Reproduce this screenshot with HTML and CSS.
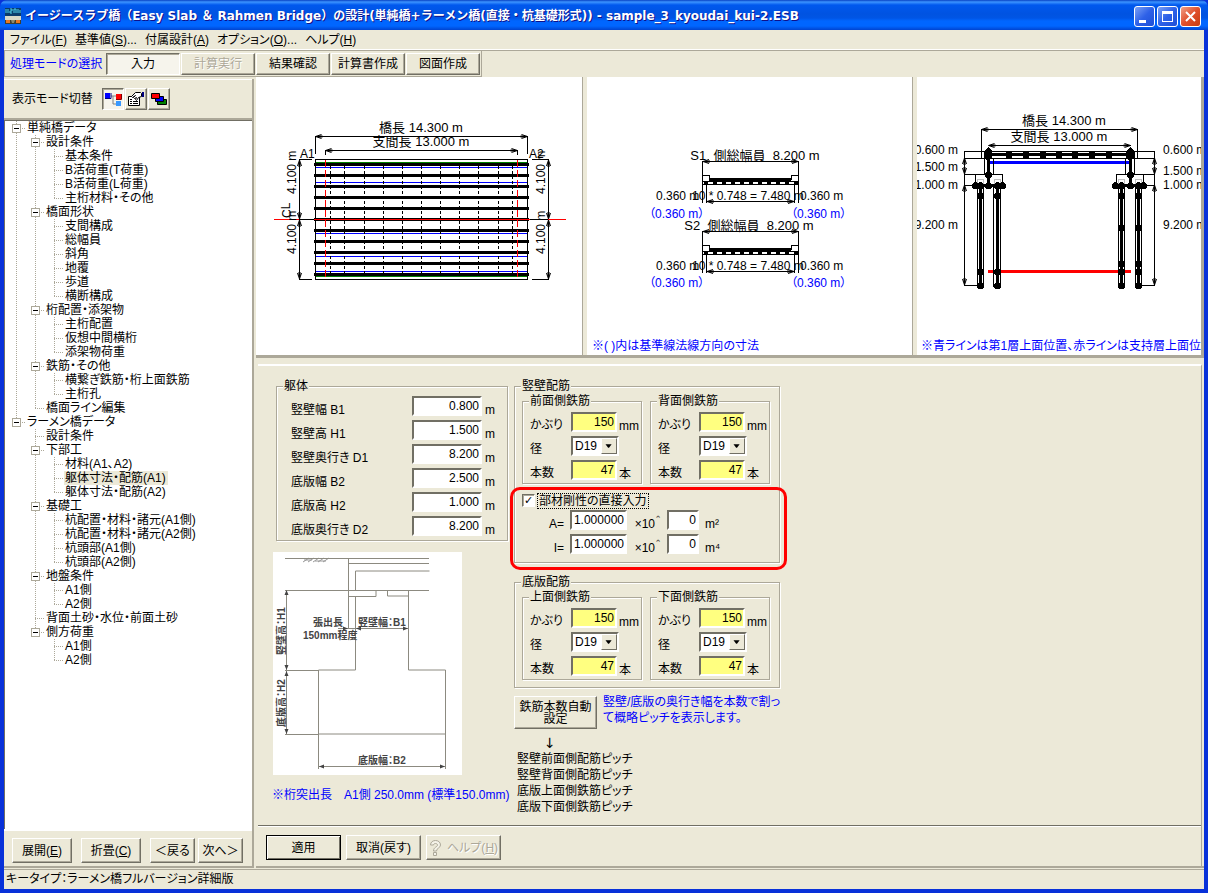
FILE: index.html
```html
<!DOCTYPE html>
<html lang="ja">
<head>
<meta charset="utf-8">
<title>イージースラブ橋</title>
<link rel="stylesheet" href="styles.css">
</head>
<body>
<div class="window">
  <header class="titlebar">
    <svg class="app-icon" width="16" height="16" viewBox="0 0 16 16" aria-hidden="true">
      <rect width="16" height="8" fill="#0a3c6c"/><path d="M1 1v4M3 1v4M5 1h2v2h-2v2h2M9 5V1h2v4M13 1v4M15 2v3" stroke="#4fd0e8" fill="none"/>
      <rect y="8" width="16" height="4" fill="#d8d8c8"/><rect y="12" width="16" height="4" fill="#404030"/><rect x="1" y="12" width="4" height="3" fill="#e87820"/><rect x="11" y="12" width="4" height="3" fill="#e87820"/><path d="M6 12h4l-1 3H7z" fill="#8a8a70"/>
    </svg>
    <h1 class="title">イージースラブ橋（Easy Slab ＆ Rahmen Bridge）の設計(単純橋+ラーメン橋(直接・杭基礎形式)) - sample_3_kyoudai_kui-2.ESB</h1>
    <div class="caption-buttons">
      <button class="cap" aria-label="最小化"><svg width="19" height="19" viewBox="0 0 19 19"><path d="M4 13h7v3H4z" fill="#fff"/></svg></button>
      <button class="cap" aria-label="最大化"><svg width="19" height="19" viewBox="0 0 19 19"><path d="M4 4h11v11H4zM5 7v7h9V7z" fill="#fff" fill-rule="evenodd"/></svg></button>
      <button class="cap cap-close" aria-label="閉じる"><svg width="19" height="19" viewBox="0 0 19 19"><path d="M5 5l9 9M14 5l-9 9" stroke="#fff" stroke-width="2"/></svg></button>
    </div>
  </header>

  <div class="client">
    <nav class="menubar">
      <button>ファイル(<u>F</u>)</button><button>基準値(<u>S</u>)...</button><button>付属設計(<u>A</u>)</button><button>オプション(<u>O</u>)...</button><button>ヘルプ(<u>H</u>)</button>
    </nav>

    <div class="toolbar">
      <div class="modes">
        <span class="modes-label">処理モードの選択</span>
        <button class="btn mode pressed">入力</button>
        <button class="btn mode" disabled>計算実行</button>
        <button class="btn mode">結果確認</button>
        <button class="btn mode">計算書作成</button>
        <button class="btn mode">図面作成</button>
      </div>
    </div>

    <main class="main">
      <aside class="side">
        <div class="view-switch">
          <span>表示モード切替</span>
          <div class="icon-buttons">
            <button class="btn icon pressed" aria-label="ツリー"><svg width="18" height="16" viewBox="0 0 18 16"><path d="M7 5h7M9 5v8h4" stroke="#808080" fill="none"/><rect x="1" y="2" width="5" height="5" fill="#00f"/><path d="M1 7.500h6V2" stroke="#000080" fill="none"/><rect x="12" y="3" width="5" height="5" fill="#f00"/><path d="M12 8.500h5.500V3" stroke="#800000" fill="none"/><rect x="12" y="10" width="5" height="5" fill="#3898ff"/></svg></button>
            <button class="btn icon" aria-label="プロパティ"><svg width="18" height="16" viewBox="0 0 18 16"><path d="M1.500 5.500h11v9h-11z" fill="#fff" stroke="#000"/><path d="M3 10.500h2M6 10.500h5M3 12.500h2M6 12.500h5M3 8.500h2" stroke="#000"/><path d="M4.500 5.500l4-4h5l1 1v3l-3 1-2 3-1-1 1-2-2 1-1-1 2-2-3 2z" fill="#fff" stroke="#000"/><path d="M15 1h2v5h-2z" fill="#000080"/></svg></button>
            <button class="btn icon" aria-label="重ねて表示"><svg width="18" height="16" viewBox="0 0 18 16"><path d="M7.500 8.500h9v5h-9z" fill="#008000" stroke="#000"/><path d="M5.500 5.500h8v5h-8z" fill="#00f" stroke="#000"/><path d="M1.500 2.500h8v5h-8z" fill="#f00" stroke="#000"/></svg></button>
          </div>
        </div>

        <div class="tree">
          <ul>
            <li><div class="node"><button class="twisty" aria-label="折畳"></button><span>単純橋データ</span></div>
              <ul>
                <li><div class="node"><button class="twisty" aria-label="折畳"></button><span>設計条件</span></div>
                  <ul>
                    <li><div class="node leaf"><span>基本条件</span></div></li>
                    <li><div class="node leaf"><span>B活荷重(T荷重)</span></div></li>
                    <li><div class="node leaf"><span>B活荷重(L荷重)</span></div></li>
                    <li><div class="node leaf"><span>主桁材料・その他</span></div></li>
                  </ul></li>
                <li><div class="node"><button class="twisty" aria-label="折畳"></button><span>橋面形状</span></div>
                  <ul>
                    <li><div class="node leaf"><span>支間構成</span></div></li>
                    <li><div class="node leaf"><span>総幅員</span></div></li>
                    <li><div class="node leaf"><span>斜角</span></div></li>
                    <li><div class="node leaf"><span>地覆</span></div></li>
                    <li><div class="node leaf"><span>歩道</span></div></li>
                    <li><div class="node leaf"><span>横断構成</span></div></li>
                  </ul></li>
                <li><div class="node"><button class="twisty" aria-label="折畳"></button><span>桁配置・添架物</span></div>
                  <ul>
                    <li><div class="node leaf"><span>主桁配置</span></div></li>
                    <li><div class="node leaf"><span>仮想中間横桁</span></div></li>
                    <li><div class="node leaf"><span>添架物荷重</span></div></li>
                  </ul></li>
                <li><div class="node"><button class="twisty" aria-label="折畳"></button><span>鉄筋・その他</span></div>
                  <ul>
                    <li><div class="node leaf"><span>横繋ぎ鉄筋・桁上面鉄筋</span></div></li>
                    <li><div class="node leaf"><span>主桁孔</span></div></li>
                  </ul></li>
                <li><div class="node leaf"><span>橋面ライン編集</span></div></li>
              </ul></li>
            <li><div class="node"><button class="twisty" aria-label="折畳"></button><span>ラーメン橋データ</span></div>
              <ul>
                <li><div class="node leaf"><span>設計条件</span></div></li>
                <li><div class="node"><button class="twisty" aria-label="折畳"></button><span>下部工</span></div>
                  <ul>
                    <li><div class="node leaf"><span>材料(A1、A2)</span></div></li>
                    <li><div class="node leaf"><span class="selected">躯体寸法・配筋(A1)</span></div></li>
                    <li><div class="node leaf"><span>躯体寸法・配筋(A2)</span></div></li>
                  </ul></li>
                <li><div class="node"><button class="twisty" aria-label="折畳"></button><span>基礎工</span></div>
                  <ul>
                    <li><div class="node leaf"><span>杭配置・材料・諸元(A1側)</span></div></li>
                    <li><div class="node leaf"><span>杭配置・材料・諸元(A2側)</span></div></li>
                    <li><div class="node leaf"><span>杭頭部(A1側)</span></div></li>
                    <li><div class="node leaf"><span>杭頭部(A2側)</span></div></li>
                  </ul></li>
                <li><div class="node"><button class="twisty" aria-label="折畳"></button><span>地盤条件</span></div>
                  <ul>
                    <li><div class="node leaf"><span>A1側</span></div></li>
                    <li><div class="node leaf"><span>A2側</span></div></li>
                  </ul></li>
                <li><div class="node leaf"><span>背面土砂・水位・前面土砂</span></div></li>
                <li><div class="node"><button class="twisty" aria-label="折畳"></button><span>側方荷重</span></div>
                  <ul>
                    <li><div class="node leaf"><span>A1側</span></div></li>
                    <li><div class="node leaf"><span>A2側</span></div></li>
                  </ul></li>
              </ul></li>
          </ul>
        </div>

        <div class="side-actions">
          <button class="btn wide">展開(<u>E</u>)</button>
          <button class="btn wide">折畳(<u>C</u>)</button>
          <div class="pager"><button class="btn">＜戻る</button><button class="btn">次へ＞</button></div>
        </div>
      </aside>

      <section class="work">
        <div class="figures">
          <div class="figure">
            <svg class="drawing" width="326" height="278" viewBox="256 77 326 278">
              <defs>
                <marker id="arrow" markerWidth="10" markerHeight="6" refX="9" refY="3" orient="auto-start-reverse" markerUnits="userSpaceOnUse"><path class="head" d="M2 2h4v2H2z" fill="#000"/><path class="head" d="M3 1l6 2-6 2" fill="none" stroke="#000"/></marker>
              </defs>
              <path class="ln" d="M315.500 159.500h212v120h-212z"/>
              <path class="green" d="M316 162.500h211M316 276.500h211"/>
              <path class="thick" d="M314 164.500h215M314 175.500h215M314 186.500h215M314 197.500h215M314 208.500h215M314 219.500h215M314 230.500h215M314 241.500h215M314 252.500h215M314 263.500h215M314 274.500h215"/>
              <path class="blue" d="M316 167.500h211M316 182.500h211M316 233.500h211M316 256.500h211M316 271.500h211"/>
              <path class="ln" stroke-dasharray="3 2" d="M330.500 166v108M344.500 166v108M364.500 166v108M383.500 166v108M402.500 166v108M421.500 166v108M440.500 166v108M459.500 166v108M478.500 166v108M498.500 166v108M512.500 166v108"/>
              <path class="red" stroke-dasharray="7 3" d="M325.500 160v119M517.500 160v119"/>
              <path class="red" d="M274 219.500h292"/>
              <path class="ln" d="M299 219.500h15M530 219.500h18M315.500 154v-18M527.500 154v-18M325.500 155v-5M517.500 155v-5M299 159.500h13M299 279.500h13M532 159.500h17M532 279.500h17"/>
              <path class="dim" d="M315.500 136.500h212"/><path class="dim" d="M325.500 150.500h192"/>
              <path class="dim" d="M299.500 160v59"/><path class="dim" d="M299.500 220v59"/><path class="dim" d="M548.500 160v59"/><path class="dim" d="M548.500 220v59"/>
              <g class="heading"><text x="421" y="132" text-anchor="middle">橋長 14.300 m</text>
              <text x="421" y="146" text-anchor="middle">支間長 13.000 m</text></g>
              <text x="300" y="158">A1</text><text x="529" y="158">A2</text>
              <text transform="translate(296 194) rotate(-90)">4.100 m</text><text transform="translate(296 254) rotate(-90)">4.100 m</text>
              <text transform="translate(545 194) rotate(-90)">4.100 m</text><text transform="translate(545 254) rotate(-90)">4.100 m</text>
              <text transform="translate(291 218) rotate(-90)">C<tspan dy="-1">L</tspan></text>
            </svg>
          </div>
          <div class="figure">
            <svg class="drawing" width="325" height="278" viewBox="587 77 325 278">
              <g id="section">
                <path class="ln" d="M702.500 161v42M798.500 161v42M706.500 184v19M794.500 184v19M702.500 184.500h96M702.500 179.500v-4h7v4M791.500 179.500v-4h7v4"/>
                <path class="thick" d="M709 179.500h82"/>
                <path class="ln" d="M703 181.500h95"/>
                <path class="thick" d="M704 183h95" stroke-dasharray="4 5"/>
                <path class="dim" d="M703 161.500h95"/><path class="dim" d="M707 201.500h87"/>
                <text x="656" y="200">0.360 m</text><text x="692" y="200">10 * 0.748 = 7.480 m</text><text x="800" y="200">0.360 m</text>
              </g>
              <use href="#section" y="70"/>
              <g class="heading"><text x="755" y="160" text-anchor="middle">S1&#160; 側総幅員&#160; 8.200 m</text>
              <text x="749" y="230" text-anchor="middle">S2&#160; 側総幅員&#160; 8.200 m</text></g>
              <g class="note"><text x="649" y="218">（0.360 m）</text><text x="791" y="218">（0.360 m）</text><text x="649" y="287">（0.360 m）</text><text x="791" y="287">（0.360 m）</text>
              <text x="592" y="350">※( )内は基準線法線方向の寸法</text></g>
            </svg>
          </div>
          <div class="figure">
            <svg class="drawing" width="284" height="278" viewBox="916 77 284 278">
              <path class="ln" d="M980.500 158v-29M1136.500 158v-29M983.500 151.500h150v7h-150zM963 151.500h20M963 158.500h20M963 174.500h12M963 185.500h12M963 285.500h16M1133 151.500h21M1133 158.500h21M1142 174.500h12M1142 185.500h12M1137 285.500h17"/>
              <path class="dim" d="M980.500 129.500h156"/><path class="dim" d="M987.500 145.500h142"/>
              <path class="dim" d="M963.500 158v16"/><path class="dim" d="M963.500 185v100"/><path class="dim" d="M1153.500 158v16"/><path class="dim" d="M1153.500 185v100"/>
              <path class="ln" d="M963.500 151v34M1153.500 151v34"/>
              <path class="blue wide-line" d="M987 162.500h142"/><path class="red wide-line" d="M987 271.500h143"/>
              <path class="ln" d="M983.500 158v16M992.500 158v16M1124.500 158v16M1133.500 158v16M974.500 185v-11h27v11M1115.500 185v-11h27v11"/>
              <path class="ln" d="M976.500 185v101h6V185M992.500 185v101h7V185M1117.500 185v101h6V185M1134.500 185v101h6V185"/>
              <path d="M976.500 184v-5h6v5M993.500 184v-5h6v5M1117.500 184v-5h6v5M1134.500 184v-5h6v5" fill="none" stroke="#c0c0c0"/>
              <path class="thick" d="M987 154.500h142M987.500 154v31M1129.500 154v31M974 185.500h28M1115 185.500h27M979.500 185v100M996.500 185v100M1120.500 185v100M1137.500 185v100"/>
              <path stroke="#000" stroke-width="7" d="M1005 154.500h6M1022 154.500h6M1039 154.500h6M1055 154.500h6M1071 154.500h6M1088 154.500h6M1105 154.500h6"/>
              <path d="M983 151l4-4 4 4v7l-4 3-4-3zM1125 151l4-4 4 4v7l-4 3-4-3z"/>
              <path class="dots" d="M974.500 185.500h.01M979.500 185.500h.01M987.500 185.500h.01M996.500 185.500h.01M1001.500 185.500h.01M1114.500 185.500h.01M1120.500 185.500h.01M1129.500 185.500h.01M1137.500 185.500h.01M1142.500 185.500h.01M987.500 174.500h.01M1129.500 174.500h.01M979.500 195.500h.01M996.500 195.500h.01M979.500 271.500h.01M996.500 271.500h.01M979.500 285.500h.01M996.500 285.500h.01M1120.500 195.500h.01M1137.500 195.500h.01M1120.500 227.500h.01M1137.500 227.500h.01M1120.500 263.500h.01M1137.500 263.500h.01M1120.500 271.500h.01M1137.500 271.500h.01M1120.500 285.500h.01M1137.500 285.500h.01"/>
              <g class="heading"><text x="1063" y="125" text-anchor="middle">橋長 14.300 m</text><text x="1058" y="141" text-anchor="middle">支間長 13.000 m</text></g>
              <g text-anchor="end"><text x="957" y="154">0.600 m</text><text x="957" y="171">1.500 m</text><text x="957" y="189">1.000 m</text><text x="957" y="229">9.200 m</text></g>
              <text x="1162" y="154">0.600 m</text><text x="1162" y="175">1.500 m</text><text x="1162" y="189">1.000 m</text><text x="1162" y="229">9.200 m</text>
              <g class="note"><text x="920" y="350">※青ラインは第1層上面位置、赤ラインは支持層上面位</text></g>
            </svg>
          </div>
        </div>

        <form class="form" onsubmit="return false">
          <div class="fields">
            <div class="col-body">
              <fieldset class="group body-dims">
                <legend>躯体</legend>
                <div class="dim-row"><label for="b1">竪壁幅 B1</label><input id="b1" type="text" value="0.800"><span>m</span></div>
                <div class="dim-row"><label for="h1">竪壁高 H1</label><input id="h1" type="text" value="1.500"><span>m</span></div>
                <div class="dim-row"><label for="d1">竪壁奥行き D1</label><input id="d1" type="text" value="8.200"><span>m</span></div>
                <div class="dim-row"><label for="b2">底版幅 B2</label><input id="b2" type="text" value="2.500"><span>m</span></div>
                <div class="dim-row"><label for="h2">底版高 H2</label><input id="h2" type="text" value="1.000"><span>m</span></div>
                <div class="dim-row"><label for="d2">底版奥行き D2</label><input id="d2" type="text" value="8.200"><span>m</span></div>
              </fieldset>
              <svg class="sketch" width="189" height="223" viewBox="273 552 189 223">
                <path d="M303 562l6-4M308 562l6-4M313 562l6-4M318 562l6-4M323 562l6-4M304 560h8M315 561h11" fill="none" stroke="#999"/>
                <g fill="none" stroke="#8c8a80">
                  <path d="M285 558.500h144M348.500 558v70M348 563.500h81M355.500 590v-19h74M285 590.500h144M348 596.500h28v-6M387.500 590v6h21M355.500 596v74h-37v64h127v-64h-37v-80"/>
                  <path d="M285 670.500h33M285 734.500h33M286.500 590v144M318.500 734v35M445.500 734v35M318 766.500h127M338 628.500h70"/>
                </g>
                <path d="M286.500 590l-2 5h4zM286.500 670l-2-5h4zM286.500 671l-2 5h4zM286.500 734l-2-5h4zM319 766.500l5-2v4zM445 766.500l-5-2v4zM356 628.500l5-2v4zM408 628.500l-5-2v4zM348 628.500l-5-2v4z" fill="#444"/>
                <text x="313" y="626">張出長</text><text x="303" y="639">150mm程度</text><text x="382" y="626" text-anchor="middle">竪壁幅：B1</text><text x="382" y="764" text-anchor="middle">底版幅：B2</text>
                <text transform="translate(285 655) rotate(-90)">竪壁高：H1</text><text transform="translate(285 727) rotate(-90)">底版高：H2</text>
              </svg>
              <p class="note projection">※桁突出長　A1側 250.0mm (標準150.0mm)</p>
            </div>

            <div class="col-rebar">
              <fieldset class="group">
                <legend>竪壁配筋</legend>
                <div class="pair">
                  <fieldset class="group bars"><legend>前面側鉄筋</legend>
                    <div class="bar-row"><label for="fc">かぶり</label><input id="fc" class="calc" type="text" value="150"><span>mm</span></div>
                    <div class="bar-row"><label for="fd">径</label><span class="combo"><select id="fd"><option>D19</option></select><svg class="drop" width="16" height="16" viewBox="0 0 16 16"><path d="M4 6h7l-3 4H7z"/></svg></span></div>
                    <div class="bar-row"><label for="fn">本数</label><input id="fn" class="calc" type="text" value="47"><span>本</span></div>
                  </fieldset>
                  <fieldset class="group bars"><legend>背面側鉄筋</legend>
                    <div class="bar-row"><label for="rc">かぶり</label><input id="rc" class="calc" type="text" value="150"><span>mm</span></div>
                    <div class="bar-row"><label for="rd">径</label><span class="combo"><select id="rd"><option>D19</option></select><svg class="drop" width="16" height="16" viewBox="0 0 16 16"><path d="M4 6h7l-3 4H7z"/></svg></span></div>
                    <div class="bar-row"><label for="rn">本数</label><input id="rn" class="calc" type="text" value="47"><span>本</span></div>
                  </fieldset>
                </div>
                <div class="stiffness">
                  <div class="check"><input id="direct" type="checkbox" checked><label for="direct">部材剛性の直接入力</label></div>
                  <div class="stiff-row"><label for="am">A=</label><input id="am" type="text" value="1.000000"><label for="ae">×10＾</label><input id="ae" type="text" value="0"><span>m²</span></div>
                  <div class="stiff-row"><label for="im">I=</label><input id="im" type="text" value="1.000000"><label for="ie">×10＾</label><input id="ie" type="text" value="0"><span>m⁴</span></div>
                </div>
              </fieldset>
              <fieldset class="group">
                <legend>底版配筋</legend>
                <div class="pair">
                  <fieldset class="group bars"><legend>上面側鉄筋</legend>
                    <div class="bar-row"><label for="tc">かぶり</label><input id="tc" class="calc" type="text" value="150"><span>mm</span></div>
                    <div class="bar-row"><label for="td">径</label><span class="combo"><select id="td"><option>D19</option></select><svg class="drop" width="16" height="16" viewBox="0 0 16 16"><path d="M4 6h7l-3 4H7z"/></svg></span></div>
                    <div class="bar-row"><label for="tn">本数</label><input id="tn" class="calc" type="text" value="47"><span>本</span></div>
                  </fieldset>
                  <fieldset class="group bars"><legend>下面側鉄筋</legend>
                    <div class="bar-row"><label for="uc">かぶり</label><input id="uc" class="calc" type="text" value="150"><span>mm</span></div>
                    <div class="bar-row"><label for="ud">径</label><span class="combo"><select id="ud"><option>D19</option></select><svg class="drop" width="16" height="16" viewBox="0 0 16 16"><path d="M4 6h7l-3 4H7z"/></svg></span></div>
                    <div class="bar-row"><label for="un">本数</label><input id="un" class="calc" type="text" value="47"><span>本</span></div>
                  </fieldset>
                </div>
              </fieldset>
              <div class="auto">
                <button class="btn auto-btn" type="button">鉄筋本数自動<br>設定</button>
                <p class="note">竪壁/底版の奥行き幅を本数で割っ<br>て概略ピッチを表示します。</p>
              </div>
              <div class="arrow">↓</div>
              <ul class="pitches"><li>竪壁前面側配筋ピッチ</li><li>竪壁背面側配筋ピッチ</li><li>底版上面側鉄筋ピッチ</li><li>底版下面側鉄筋ピッチ</li></ul>
            </div>
          </div>
          <div class="form-actions">
            <button class="btn default" type="submit">適用</button>
            <button class="btn" type="button">取消(戻す)</button>
            <button class="btn help" type="button" disabled><svg width="13" height="18" viewBox="0 0 13 18"><path d="M1.500 6c0-6 10-6 10 0 0 3-4 3-4 6h-3c0-4 4-4 4-6 0-2-4-2-4 0zM4.500 13.500h3v3h-3z" fill="#f4f2e8" stroke="#aca899"/></svg><span>ヘルプ(<u>H</u>)</span></button>
          </div>
        </form>
      </section>
    </main>

    <footer class="status">キータイプ：ラーメン橋フルバージョン詳細版</footer>
  </div>
</div>
</body>
</html>
```

FILE: styles.css
```css
:root {
  --face: #ece9d8;
  --shade: #aca899;
  --dark: #716f64;
  --note: #0000ff;
}
* { box-sizing: border-box; }
body {
  margin: 0;
  background: #0831d9;
  color: #000;
  font: 12px/14px "Liberation Sans", "Noto Sans CJK JP", sans-serif;
  font-feature-settings: "palt";
}
button, input, select { font: inherit; font-feature-settings: inherit; color: inherit; }
p, ul, h1 { margin: 0; padding: 0; list-style: none; }
fieldset { min-width: 0; margin: 0; padding: 0; }

.window { display: flex; flex-direction: column; min-height: 100vh; }
.titlebar {
  display: flex;
  align-items: center;
  gap: 4px;
  height: 30px;
  padding: 2px 7px 0 5px;
  border-radius: 7px 7px 0 0;
  background: linear-gradient(#0842c4 0, #3c94ff 2px, #0058ee 5px, #0053e1 14px, #0055e5 18px, #0066ff 21px, #0066ff 26px, #0044d0 30px);
}
.title {
  flex: 1;
  min-width: 0;
  overflow: hidden;
  white-space: nowrap;
  font: bold 12px/20px "DejaVu Sans", "Noto Sans CJK JP", sans-serif;
  color: #fff;
  text-shadow: 1px 1px #0f1089;
}
.caption-buttons { display: flex; gap: 2px; }
.cap {
  display: grid;
  width: 21px;
  height: 21px;
  padding: 0;
  border: 1px solid #fff;
  border-radius: 3px;
  background: linear-gradient(135deg, #7ba1f5, #2e61e8 50%, #1d4fd6);
}
.cap-close { background: linear-gradient(135deg, #f0a088, #e0502c 50%, #c83c10); }

.client {
  flex: 1;
  display: flex;
  flex-direction: column;
  margin: 0 4px 4px;
  background: var(--face);
}
.menubar {
  display: flex;
  gap: 8px;
  height: 21px;
  padding: 0 6px 1px;
  border-bottom: 1px solid var(--shade);
  box-shadow: inset 0 -1px #fff;
}
.menubar button { padding: 0; border: 0; background: none; white-space: nowrap; }

.toolbar { height: 26px; }
.modes {
  display: inline-flex;
  align-items: center;
  gap: 1px;
  height: 26px;
  padding: 0 1px 0 5px;
  border: solid;
  border-width: 0 1px 1px;
  border-color: var(--shade);
}
.modes-label { width: 95px; color: var(--note); white-space: nowrap; }
.btn {
  padding: 0 2px;
  border: 1px solid;
  border-color: #fff var(--dark) var(--dark) #fff;
  box-shadow: inset -1px -1px var(--shade);
  background: var(--face);
  white-space: nowrap;
}
.btn:disabled { color: var(--shade); text-shadow: 1px 1px #fff; }
.btn.pressed {
  border-color: var(--dark) #fff #fff var(--dark);
  box-shadow: inset 1px 1px var(--shade);
  background: #f6f4ec;
}
.btn.mode { width: 74px; height: 22px; }

.main { flex: 1; display: flex; gap: 2px; }
.side {
  flex: none;
  display: flex;
  flex-direction: column;
  width: 250px;
  margin-top: 2px;
  border-right: 2px solid var(--shade);
  border-bottom: 2px solid var(--shade);
}
.view-switch {
  display: flex;
  align-items: center;
  gap: 9px;
  height: 41px;
  padding: 0 8px;
  border-bottom: 2px solid var(--shade);
  border-top: 1px solid #fff;
}
.icon-buttons { display: flex; gap: 1px; }
.btn.icon { display: grid; place-items: center; width: 22px; height: 22px; padding: 0; }
.icon svg { display: block; }

.tree {
  flex: 1;
  padding: 0 5px 0 7px;
  border-left: 1px solid var(--dark);
  border-top: 1px solid var(--dark);
  background: #fff;
}
.tree li {
  background:
    repeating-linear-gradient(var(--shade) 0 1px, transparent 1px 2px) 4px 0 / 1px 100% no-repeat,
    repeating-linear-gradient(90deg, var(--shade) 0 1px, transparent 1px 2px) 4px 7px / 10px 1px no-repeat;
}
.tree li:last-child { background-size: 1px 8px, 10px 1px; }
.tree ul ul { margin-left: 19px; }
.node { display: flex; align-items: center; gap: 5px; height: 14px; }
.node span { height: 14px; padding: 0 2px 0 1px; white-space: nowrap; }
.leaf { padding-left: 14px; }
.node .selected { background: var(--face); }
.twisty {
  width: 9px;
  height: 9px;
  padding: 0;
  border: 1px solid var(--shade);
  background: linear-gradient(#000, #000) center / 5px 1px no-repeat #fff;
}
.side-actions {
  display: flex;
  justify-content: space-between;
  padding: 7px 9px 3px 8px;
  border-top: 2px solid #fff;
}
.side-actions .btn { width: 45px; height: 25px; }
.side-actions .wide { width: 60px; }
.pager { display: flex; gap: 3px; }

.work { flex: 1; min-width: 0; display: flex; flex-direction: column; border-bottom: 2px solid var(--shade); }
.figures {
  display: grid;
  grid-template-columns: 326fr 325fr 284fr;
  gap: 5px;
  border-right: 3px solid var(--shade);
  border-bottom: 3px solid var(--shade);
  background: var(--face);
}
.figure {
  min-width: 0;
  height: 278px;
  overflow: hidden;
  background: #fff;
  box-shadow: 1px 0 var(--shade);
}
.drawing { display: block; font-size: 12px; }
.drawing path { shape-rendering: crispEdges; }
.drawing .head { shape-rendering: auto; }
.heading { font-size: 13px; }
.ln { fill: none; stroke: #000; }
.thick { fill: none; stroke: #000; stroke-width: 3px; }
.blue { fill: none; stroke: #00f; }
.green { fill: none; stroke: #008000; }
.red { fill: none; stroke: #f00; }
.wide-line { stroke-width: 3px; }
.dots { stroke: #000; stroke-width: 7px; stroke-linecap: round; }
.dim { fill: none; stroke: #000; marker-start: url(#arrow); marker-end: url(#arrow); }
.note { color: var(--note); fill: var(--note); white-space: nowrap; }

.form {
  flex: 1;
  display: flex;
  flex-direction: column;
  margin: 6px 2px 0;
  border-top: 2px solid #fff;
  border-right: 1px solid var(--shade);
}
.fields {
  flex: 1;
  display: flex;
  align-items: flex-start;
  gap: 6px;
  padding: 14px 14px 0;
  border-bottom: 1px solid var(--dark);
}
.group {
  border: 1px solid var(--shade);
  box-shadow: 1px 1px #fff, inset 1px 1px #fff;
}
.group legend { height: 13px; margin-left: 6px; padding: 0 1px; background: var(--face); line-height: 13px; }
.col-body { width: 236px; }
.body-dims { margin-left: 4px; padding-top: 3px; height: 161px; }
.dim-row { display: grid; grid-template-columns: 120px 70px 1fr; height: 24px; padding-left: 14px; column-gap: 1px; }
.dim-row label, .dim-row span { padding-top: 7px; }
.dim-row span { padding-left: 2px; }

input[type="text"], select {
  width: 100%;
  height: 20px;
  padding: 0 1px;
  border: 2px solid;
  border-color: var(--dark) #fff #fff var(--dark);
  border-radius: 0;
  background: #fff;
  text-align: right;
}
input.calc { background: #ffff80; }

.sketch { display: block; margin: 11px 0 0 1px; background: #fff; font-size: 10px; font-weight: bold; }
.sketch text { fill: #444; }
.projection { margin-top: 13px; }

.col-rebar { display: grid; gap: 13px; width: 264px; }
.pair { display: grid; grid-template-columns: 120px 120px; gap: 8px; padding: 2px 7px 7px; }
.bars { padding: 4px 0 1px; }
.bar-row { display: grid; grid-template-columns: 40px 46px 1fr; column-gap: 1px; height: 24px; padding-left: 7px; }
.bar-row:last-child { height: 22px; }
.bar-row label { padding-top: 6px; }
.bar-row span:last-child { padding: 7px 0 0 1px; }
.bar-row .combo.combo { position: relative; width: 48px; padding: 0; }
.combo select { padding: 0 2px; appearance: none; text-align: left; }
.drop {
  position: absolute;
  right: 2px;
  top: 2px;
  border: 1px solid;
  border-color: #fff var(--dark) var(--dark) #fff;
  background: var(--face);
  pointer-events: none;
}
.stiffness { position: relative; padding: 0 7px 4px; }
.stiffness::after {
  content: "";
  position: absolute;
  inset: -4px -8px -8px -5px;
  border: 3px solid #f00;
  border-radius: 10px;
  pointer-events: none;
}
.check { display: flex; align-items: center; gap: 3px; height: 19px; }
.check input {
  width: 13px;
  height: 13px;
  margin: 0;
  appearance: none;
  border: 1px solid;
  border-color: var(--dark) #fff #fff var(--dark);
  box-shadow: inset 1px 1px var(--shade);
  background: #fff;
}
.check input:checked::before { content: "✓"; display: block; font: bold 11px/11px "DejaVu Sans", sans-serif; text-align: center; }
.check label { padding: 0 1px; outline: 1px dotted #000; }
.stiff-row { display: grid; grid-template-columns: 42px 57px 28px 32px 1fr; column-gap: 6px; height: 24px; }
.stiff-row label, .stiff-row span { padding-top: 7px; text-align: right; white-space: nowrap; }
.stiff-row span { text-align: left; }
.auto { display: flex; gap: 6px; margin-top: -5px; }
.auto-btn { width: 83px; height: 33px; line-height: 12px; }
.auto .note { line-height: 16px; margin-top: -2px; }
.arrow { margin: -6px 0 0 30px; font: 14px/14px "DejaVu Sans", sans-serif; }
.pitches { margin: -12px 0 0 3px; line-height: 16px; }

.form-actions { display: flex; gap: 5px; padding: 8px 8px 6px; border-top: 1px solid #fff; }
.form-actions .btn { display: flex; align-items: center; justify-content: center; width: 75px; height: 25px; overflow: hidden; }
.form-actions .help { gap: 5px; padding: 0; }
.help svg { flex: none; }
.form-actions .default { outline: 1px solid #000; outline-offset: -1px; border-color: #000; box-shadow: inset 1px 1px #fff, inset -1px -1px var(--dark); }

.status {
  height: 20px;
  margin-top: 1px;
  padding: 2px 2px 0;
  border-top: 1px solid var(--shade);
}
```
